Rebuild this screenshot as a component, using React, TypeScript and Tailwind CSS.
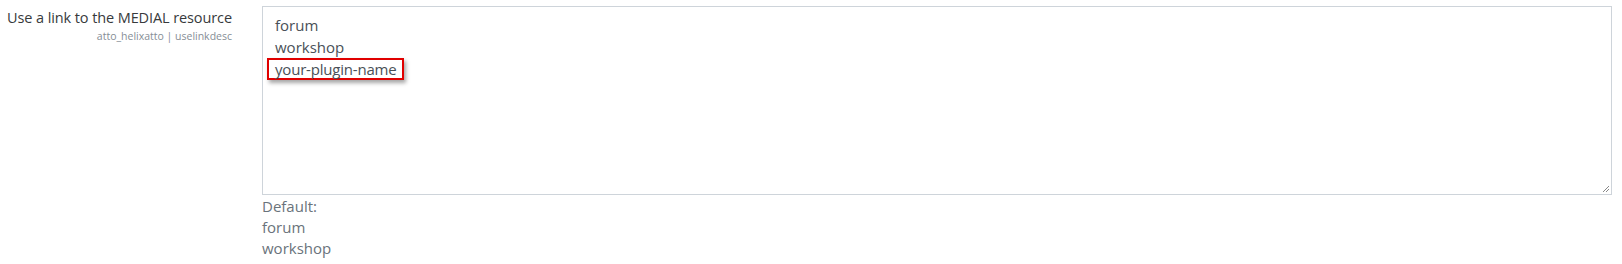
import React from "react";

export default function App() {
  return (
    <div className="w-[1622px] h-[264px] bg-white overflow-hidden" style={{ fontFamily: '"Open Sans", sans-serif' }}>
      <div className="flex pt-[6px]">
        <div className="w-[232px] shrink-0 text-right">
          <div className="whitespace-nowrap text-[14.5px] tracking-[-0.1px] leading-[22px] text-[#373a3c] pt-[1px]">Use a link to the MEDIAL resource</div>
          <div className="whitespace-nowrap text-[10.5px] leading-[14px] text-[#868e96]">atto_helixatto | uselinkdesc</div>
        </div>
        <div className="ml-[30px] w-[1350px]">
          <div className="relative h-[189px] border border-[#ced4da] bg-white px-[12px] pt-[7px] text-[15px] leading-[22px] text-[#495057]">
            <div>forum</div>
            <div>workshop</div>
            <div className="inline-block -ml-[8px] border-2 border-[#e00000] px-[6px] leading-[18px] tracking-[-0.2px] shadow-[2px_3px_4px_rgba(0,0,0,0.35)]">your-plugin-name</div>
            <svg className="absolute right-[1px] bottom-[1px]" width="10" height="10" viewBox="0 0 10 10">
              <path d="M9 3 L3 9 M9 6 L6 9" stroke="#888" strokeWidth="1" />
            </svg>
          </div>
          <div className="pt-[1px] text-[15px] leading-[21px] text-[#6a737b]">
            <div>Default:</div>
            <div>forum</div>
            <div>workshop</div>
          </div>
        </div>
      </div>
    </div>
  );
}
